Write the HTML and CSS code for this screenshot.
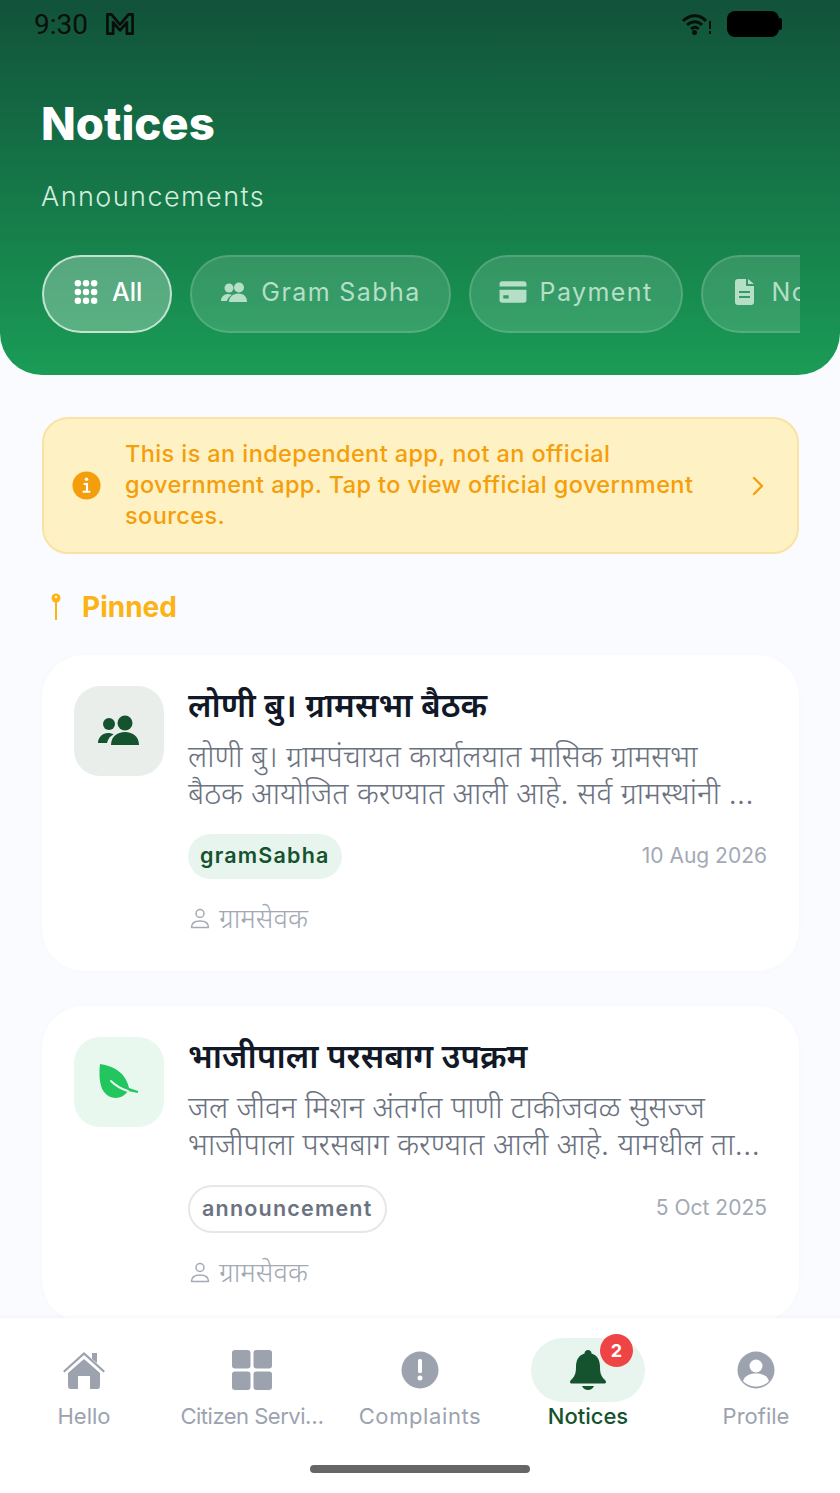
FILE: index.html
```html
<!DOCTYPE html>
<html lang="en">
<head>
    <meta charset="UTF-8">
    <meta name="viewport" content="width=device-width, initial-scale=1.0">
    <title>Notices</title>
    <link rel="stylesheet" href="styles.css">
</head>
<body>
    <div class="header">
        <div class="status-bar">
            <span class="status-time">9:30</span>
            <svg class="status-mail" viewBox="2 2 24 21"><path d="M3 21V4h3.500L14 13l7.500-9H25v17h-5V11l-6 7-6-7v10z" fill="none" stroke="#0b0f0c" stroke-width="2.400" stroke-linejoin="round"/></svg>
            <div class="status-right">
                <svg class="status-wifi" viewBox="0 0 32 24"><path d="M2 9c7-7 17-7 23 0M6 13c5-4.500 11-4.500 15 0M10 17c3-2.500 5.500-2.500 7.500 0" fill="none" stroke="#0b0f0c" stroke-width="3"/><circle cx="13.500" cy="20.500" r="2.500" fill="#0b0f0c"/><rect x="28" y="9" width="2" height="8" fill="#0b0f0c"/><rect x="28" y="19" width="2" height="3" fill="#0b0f0c"/></svg>
                <div class="status-battery"></div>
                <div class="status-cap"></div>
            </div>
        </div>
        <h1>Notices</h1>
        <p class="subtitle">Announcements</p>
        <div class="chips">
            <div class="chip chip-active">
                <svg class="chip-icon" viewBox="0 0 24 24" fill="#fff"><circle cx="4.500" cy="4" r="3"/><circle cx="12" cy="4" r="3"/><circle cx="19.500" cy="4" r="3"/><circle cx="4.500" cy="12" r="3"/><circle cx="12" cy="12" r="3"/><circle cx="19.500" cy="12" r="3"/><circle cx="4.500" cy="20" r="3"/><circle cx="12" cy="20" r="3"/><circle cx="19.500" cy="20" r="3"/></svg>
                <span>All</span>
            </div>
            <div class="chip">
                <svg class="chip-icon" viewBox="0 0 28 24" fill="#b5dfc6"><circle cx="9" cy="8" r="4.500"/><circle cx="19" cy="7.500" r="5"/><path d="M1 21c0-4 3-7 7-7 1.500 0 2.800.4 3.800 1C9 16.500 7.500 18.500 7 21z"/><path d="M9 22c0-5 4-8.500 9.500-8.500S27 17 27 22z"/></svg>
                <span>Gram Sabha</span>
            </div>
            <div class="chip">
                <svg class="chip-icon" viewBox="0 0 26 24" fill="#b5dfc6"><path d="M3 2h20a2.500 2.500 0 0 1 2.500 2.500V7H.5V4.500A2.500 2.500 0 0 1 3 2zM.5 10h25v9.500A2.500 2.500 0 0 1 23 22H3a2.500 2.500 0 0 1-2.500-2.500zM4 15v3h5v-3z" fill-rule="evenodd"/></svg>
                <span>Payment</span>
            </div>
            <div class="chip">
                <svg class="chip-icon" viewBox="0 0 20 26" fill="#b5dfc6"><path d="M3 0h8v7h8v16a3 3 0 0 1-3 3H3a3 3 0 0 1-3-3V3a3 3 0 0 1 3-3zM13 0l6 5h-6zM4 12v2h11v-2zM4 17v2h11v-2z" fill-rule="evenodd"/></svg>
                <span>Notices</span>
            </div>
        </div>
    </div>

    <div class="content">
        <div class="banner">
            <svg class="banner-icon" viewBox="0 0 30 30"><circle cx="15" cy="15" r="14.500" fill="#f59e0b"/><path d="M12 13.500h3.500v8M11 21.500h8" fill="none" stroke="#fff" stroke-width="2.200"/><circle cx="15" cy="8.500" r="1.800" fill="#fff"/></svg>
            <p>This is an independent app, not an official government app. Tap to view official government sources.</p>
            <svg class="banner-arrow" viewBox="0 0 14 20"><path d="M3 2l8 8-8 8" fill="none" stroke="#f59e0b" stroke-width="2.400" stroke-linecap="round" stroke-linejoin="round"/></svg>
        </div>

        <div class="section-label">
            <svg class="pin-icon" viewBox="0 0 12 30"><circle cx="6" cy="6" r="4.500" fill="#fbb414"/><circle cx="6" cy="5" r="1.300" fill="#fff6d8"/><rect x="5" y="9" width="2" height="19" fill="#fbb414"/></svg>
            <span>Pinned</span>
        </div>

        <div class="card">
            <div class="card-icon icon-gray">
                <svg viewBox="0 0 44 32" class="icon-people" fill="#14532d"><circle cx="12" cy="9" r="6"/><circle cx="28" cy="8" r="7.500"/><path d="M1 28c0-6 5-10 10-10 2.500 0 4 .5 5.500 1.500C13 21 11 24 10 28z"/><path d="M14 30c0-8 6-13 14-13s14 5 14 13z"/></svg>
            </div>
            <div class="card-body">
                <h2>लोणी बु। ग्रामसभा बैठक</h2>
                <p class="card-text">लोणी बु। ग्रामपंचायत कार्यालयात मासिक ग्रामसभा<br>बैठक आयोजित करण्यात आली आहे. सर्व ग्रामस्थांनी ...</p>
                <div class="card-meta">
                    <span class="tag tag-green">gramSabha</span>
                    <span class="card-date">10 Aug 2026</span>
                </div>
                <div class="card-author">
                    <svg viewBox="0 0 20 22"><circle cx="10" cy="6.500" r="4" fill="none" stroke="#a3a9b5" stroke-width="1.500"/><path d="M1.500 20.500c0-4.500 3.500-6.500 8.500-6.500s8.500 2 8.500 6.500z" fill="none" stroke="#a3a9b5" stroke-width="1.500" stroke-linejoin="round"/></svg>
                    <span>ग्रामसेवक</span>
                </div>
            </div>
        </div>

        <div class="card">
            <div class="card-icon icon-green">
                <svg viewBox="0 0 42 38" class="icon-leaf"><path d="M2 1c14 2 26 9 29 24l9 3v2l-10-2c-6 9-18 9-24 1C1 22 1 10 2 1z" fill="#22c55e"/><path d="M13 18c5 5 10 8 17 10" fill="none" stroke="#e9f8ef" stroke-width="2" stroke-linecap="round"/></svg>
            </div>
            <div class="card-body">
                <h2>भाजीपाला परसबाग उपक्रम</h2>
                <p class="card-text">जल जीवन मिशन अंतर्गत पाणी टाकीजवळ सुसज्ज<br>भाजीपाला परसबाग करण्यात आली आहे. यामधील ता...</p>
                <div class="card-meta">
                    <span class="tag tag-outline">announcement</span>
                    <span class="card-date">5 Oct 2025</span>
                </div>
                <div class="card-author">
                    <svg viewBox="0 0 20 22"><circle cx="10" cy="6.500" r="4" fill="none" stroke="#a3a9b5" stroke-width="1.500"/><path d="M1.500 20.500c0-4.500 3.500-6.500 8.500-6.500s8.500 2 8.500 6.500z" fill="none" stroke="#a3a9b5" stroke-width="1.500" stroke-linejoin="round"/></svg>
                    <span>ग्रामसेवक</span>
                </div>
            </div>
        </div>
    </div>

    <div class="nav">
        <div class="nav-items">
            <div class="nav-item">
                <div class="nav-icon">
                    <svg viewBox="0 0 44 40" width="44" height="40" fill="#9ca3af"><path d="M30 3h5v10l-5-4z"/><path d="M1 21L22 2l21 19-1.500 1.500L22 5 2.500 22.500z"/><path d="M22 9l16 14v13a3 3 0 0 1-2 3h-8V26H16v13H8a3 3 0 0 1-2-3V23z"/></svg>
                </div>
                <span>Hello</span>
            </div>
            <div class="nav-item nav-item-tight">
                <div class="nav-icon">
                    <svg viewBox="0 0 40 40" width="40" height="40" fill="#9ca3af"><rect x="0" y="0" width="18.500" height="18.500" rx="3"/><rect x="21.500" y="0" width="18.500" height="18.500" rx="3"/><rect x="0" y="21.500" width="18.500" height="18.500" rx="3"/><rect x="21.500" y="21.500" width="18.500" height="18.500" rx="3"/></svg>
                </div>
                <span>Citizen Servi…</span>
            </div>
            <div class="nav-item nav-item-wide">
                <div class="nav-icon">
                    <svg viewBox="0 0 38 38" width="38" height="38"><circle cx="19" cy="19" r="18.500" fill="#9ca3af"/><rect x="17" y="8" width="4" height="14" rx="1.500" fill="#fff"/><circle cx="19" cy="27" r="2.500" fill="#fff"/></svg>
                </div>
                <span>Complaints</span>
            </div>
            <div class="nav-item nav-item-active">
                <div class="nav-icon">
                    <svg viewBox="0 0 36 40" width="36" height="40" fill="#14532d"><path d="M18 0c2 0 3.500 1.500 3.500 3.500C28 5.500 30 11 30 17c0 6 1 9 4.500 12.500.9 1 1.500 1.500 1.500 2.500s-1 1.500-2 1.500H2c-1 0-2-.5-2-1.500s.6-1.500 1.500-2.500C5 26 6 23 6 17c0-6 2-11.500 8.500-13.500C14.500 1.500 16 0 18 0z"/><path d="M12 36h12c-1 2.500-3.500 4-6 4s-5-1.500-6-4z"/></svg>
                    <span class="nav-badge">2</span>
                </div>
                <span>Notices</span>
            </div>
            <div class="nav-item">
                <div class="nav-icon">
                    <svg viewBox="0 0 38 38" width="38" height="38"><circle cx="19" cy="19" r="18.500" fill="#9ca3af"/><circle cx="19" cy="15" r="6.500" fill="#fff"/><path d="M6 30c2-6 8-7.500 13-7.500S30 24 32 30c-3 3.500-8 5.500-13 5.500S9 33.500 6 30z" fill="#fff"/></svg>
                </div>
                <span>Profile</span>
            </div>
        </div>
        <div class="home-bar"></div>
    </div>
</body>
</html>
```

FILE: styles.css
```css
body {
    font-family: 'Inter', 'Noto Sans', 'Noto Sans Devanagari', sans-serif;
    margin: 0;
    padding: 0;
    width: 840px;
    height: 1493px;
    overflow: hidden;
    display: flex;
    flex-direction: column;
    background-color: #fafbfe;
}
.header {
    background: linear-gradient(180deg, #11523a 0%, #1a9c56 100%);
    height: 375px;
    flex-shrink: 0;
    box-sizing: border-box;
    border-radius: 0 0 42px 42px;
    padding: 0 0 0 42px;
}
.status-bar {
    display: flex;
    align-items: center;
    height: 48px;
    margin-left: -8px;
    padding-right: 58px;
    color: #0b0f0c;
}
.status-time {
    font-family: 'Roboto', sans-serif;
    font-size: 28px;
}
.status-mail {
    width: 28px;
    height: 24px;
    margin-left: 18px;
}
.status-right {
    margin-left: auto;
    display: flex;
    align-items: center;
}
.status-wifi {
    width: 32px;
    height: 24px;
    margin-right: 14px;
}
.status-battery {
    width: 52px;
    height: 26px;
    border-radius: 8px;
    background-color: #000;
}
.status-cap {
    width: 3px;
    height: 12px;
    background-color: #000;
    border-radius: 0 2px 2px 0;
}
h1 {
    font-size: 45.500px;
    font-weight: 800;
    color: #fff;
    margin: 48px 0 0 -1px;
    line-height: 56px;
}
.subtitle {
    font-size: 27px;
    font-weight: 300;
    letter-spacing: 1.450px;
    color: #d4ecdd;
    margin: 28px 0 0 -1px;
    line-height: 34px;
}
.chips {
    display: flex;
    gap: 18px;
    margin-top: 41px;
    width: 758px;
    overflow: hidden;
}
.chip {
    display: flex;
    align-items: center;
    flex-shrink: 0;
    gap: 13px;
    box-sizing: border-box;
    height: 78px;
    padding: 0 28px 4px 28px;
    border: 2px solid rgba(255,255,255,0.15);
    border-radius: 39px;
    background-color: rgba(255,255,255,0.13);
    color: #b5dfc6;
    font-size: 25px;
    letter-spacing: 1.400px;
}
.chip-active {
    background-color: rgba(255,255,255,0.28);
    border-color: rgba(255,255,255,0.65);
    color: #fff;
    font-weight: 500;
    letter-spacing: 0;
    gap: 12px;
}
.chip-icon {
    width: 28px;
    height: 26px;
}
.content {
    flex: 1;
    min-height: 0;
    overflow: hidden;
    padding: 42px 41px 0 42px;
}
.banner {
    display: flex;
    align-items: center;
    box-sizing: border-box;
    height: 137px;
    padding: 0 32px 2px 28px;
    background-color: #fef2c4;
    border: 2px solid #fae2a4;
    border-radius: 26px;
}
.banner-icon {
    width: 29px;
    height: 29px;
    flex-shrink: 0;
    margin-top: 2px;
}
.banner p {
    flex: 1;
    margin: 0 30px 0 24px;
    color: #f59e0b;
    font-size: 23.500px;
    font-weight: 500;
    letter-spacing: 0.400px;
    line-height: 31px;
}
.banner-arrow {
    width: 14px;
    height: 20px;
    flex-shrink: 0;
    margin-top: 2px;
}
.section-label {
    display: flex;
    align-items: center;
    height: 36px;
    margin-top: 35px;
    color: #fbb414;
    font-size: 28px;
    font-weight: 700;
}
.pin-icon {
    width: 12px;
    height: 30px;
    margin: 0 20px 0 8px;
}
.card {
    display: flex;
    box-sizing: border-box;
    height: 316px;
    margin-top: 30px;
    padding: 31px 32px 0 32px;
    background-color: #fff;
    border-radius: 42px;
    box-shadow: 0 0 6px rgba(0,0,0,0.02);
}
.card + .card {
    margin-top: 35px;
}
.card-icon {
    width: 90px;
    height: 90px;
    flex-shrink: 0;
    display: flex;
    align-items: center;
    justify-content: center;
    border-radius: 26px;
}
.icon-gray {
    background-color: #e9eeeb;
}
.icon-green {
    background-color: #e8f8ef;
}
.icon-people {
    width: 44px;
    height: 32px;
}
.icon-leaf {
    width: 42px;
    height: 38px;
}
.card-body {
    flex: 1;
    min-width: 0;
    margin-left: 24px;
}
.card-body h2 {
    margin: 0;
    font-size: 33px;
    font-weight: 600;
    line-height: 38px;
    color: #111827;
}
.card-text {
    margin: 14px 0 0;
    font-size: 30px;
    font-weight: 300;
    line-height: 37px;
    color: #6b7280;
    white-space: nowrap;
}
.card-meta {
    display: flex;
    align-items: center;
    justify-content: space-between;
    margin-top: 22px;
}
.tag {
    box-sizing: border-box;
    font-size: 21.500px;
    font-weight: 600;
    letter-spacing: 1.200px;
    line-height: 26px;
    border-radius: 24px;
}
.tag-green {
    padding: 8px 12px 11px;
    background-color: #e8f5ee;
    color: #14532d;
}
.tag-outline {
    padding: 8px 12px 10px;
    border: 2px solid #e5e7eb;
    color: #6b7280;
}
.card-date {
    font-size: 21px;
    color: #a3a9b5;
    margin-bottom: 3px;
}
.card-author {
    display: flex;
    align-items: center;
    gap: 9px;
    margin-top: 20px;
    margin-left: 2px;
    font-size: 27.500px;
    font-weight: 300;
    color: #a3a9b5;
}
.card-author svg {
    width: 20px;
    height: 22px;
}
.nav {
    position: relative;
    flex-shrink: 0;
    height: 175px;
    background-color: #fff;
    box-shadow: 0 -2px 4px rgba(0,0,0,0.03);
}
.nav-items {
    display: flex;
    padding: 20px 0 0 0;
}
.nav-item {
    width: 168px;
    display: flex;
    flex-direction: column;
    align-items: center;
    font-size: 22px;
    line-height: 26px;
    color: #9ca3af;
}
.nav-item-wide {
    letter-spacing: 0.600px;
}
.nav-item-tight {
    letter-spacing: -0.500px;
}
.nav-item-active {
    color: #14532d;
    font-weight: 500;
}
.nav-icon {
    position: relative;
    display: flex;
    align-items: center;
    justify-content: center;
    width: 114px;
    height: 64px;
    border-radius: 32px;
    margin-bottom: 1px;
}
.nav-item-active .nav-icon {
    background-color: #e8f5ee;
}
.nav-badge {
    position: absolute;
    top: -4px;
    right: 12px;
    width: 33px;
    height: 33px;
    border-radius: 50%;
    background-color: #ef4444;
    color: #fff;
    font-size: 18px;
    font-weight: 700;
    display: flex;
    align-items: center;
    justify-content: center;
}
.home-bar {
    position: absolute;
    left: 310px;
    bottom: 20px;
    width: 220px;
    height: 8px;
    border-radius: 4px;
    background-color: #666;
}
```
